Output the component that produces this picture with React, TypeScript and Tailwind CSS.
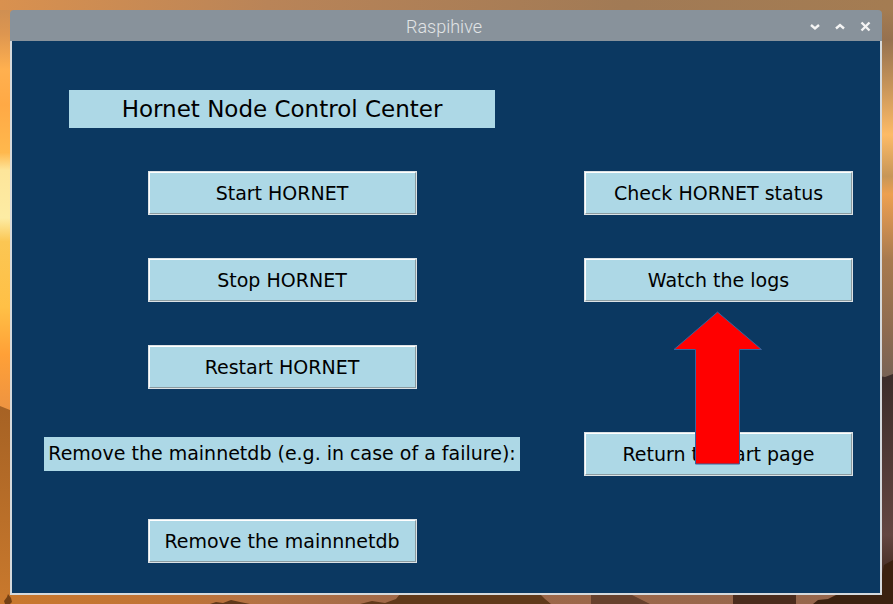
import type { ReactNode } from "react";

function Wallpaper() {
  return (
    <svg
      className="absolute inset-0 h-full w-full"
      viewBox="0 0 893 604"
      preserveAspectRatio="none"
      aria-hidden="true"
    >
      <defs>
        <linearGradient id="skyTop" x1="0" x2="1" y1="0" y2="0">
          <stop offset="0" stopColor="#d9914f" />
          <stop offset="0.3" stopColor="#b98458" />
          <stop offset="0.7" stopColor="#a17a55" />
          <stop offset="1" stopColor="#a47c52" />
        </linearGradient>
        <linearGradient id="skyLeft" x1="0" x2="0" y1="0" y2="1">
          <stop offset="0" stopColor="#cf8f52" />
          <stop offset="0.04" stopColor="#dd9650" />
          <stop offset="0.1" stopColor="#ffb04f" />
          <stop offset="0.16" stopColor="#ffa945" />
          <stop offset="0.24" stopColor="#ffb84d" />
          <stop offset="0.27" stopColor="#fde59a" />
          <stop offset="0.35" stopColor="#fdeca4" />
          <stop offset="0.39" stopColor="#fbc653" />
          <stop offset="0.5" stopColor="#ffc046" />
          <stop offset="0.58" stopColor="#ffa037" />
          <stop offset="0.67" stopColor="#ee9441" />
        </linearGradient>
        <linearGradient id="hillLeft" x1="0" x2="0" y1="0" y2="1">
          <stop offset="0" stopColor="#a66224" />
          <stop offset="1" stopColor="#c9792d" />
        </linearGradient>
        <linearGradient id="skyRight" x1="0" x2="0" y1="0" y2="1">
          <stop offset="0" stopColor="#a47c52" />
          <stop offset="0.05" stopColor="#96714f" />
          <stop offset="0.13" stopColor="#c8955a" />
          <stop offset="0.21" stopColor="#fdbb66" />
          <stop offset="0.28" stopColor="#c79657" />
          <stop offset="0.31" stopColor="#eda04f" />
          <stop offset="0.36" stopColor="#cf8f50" />
          <stop offset="0.42" stopColor="#a87a4e" />
          <stop offset="0.54" stopColor="#8e6b50" />
          <stop offset="0.62" stopColor="#786355" />
        </linearGradient>
        <linearGradient id="hillRight" x1="0" x2="0" y1="0" y2="1">
          <stop offset="0" stopColor="#3c2d2a" />
          <stop offset="0.7" stopColor="#644641" />
          <stop offset="1" stopColor="#2d1a0c" />
        </linearGradient>
        <linearGradient id="ground" x1="0" x2="1" y1="0" y2="0">
          <stop offset="0" stopColor="#c9782d" />
          <stop offset="0.2" stopColor="#bf7337" />
          <stop offset="0.3" stopColor="#b17145" />
          <stop offset="0.45" stopColor="#9f6848" />
          <stop offset="1" stopColor="#94664d" />
        </linearGradient>
      </defs>
      <rect width="893" height="604" fill="url(#skyTop)" />
      <rect y="10" width="20" height="594" fill="url(#skyLeft)" />
      <path d="M0 406 L10 410 V604 H0Z" fill="url(#hillLeft)" />
      <rect x="873" y="10" width="20" height="594" fill="url(#skyRight)" />
      <path d="M873 375 L885 377 L893 374 V604 H873Z" fill="url(#hillRight)" />
      <rect y="594" width="893" height="10" fill="url(#ground)" />
      <path d="M8 594 L11 598 L12 602 L10 604 H5 L4 601 L7 597Z" fill="#744014" />
      <path
        d="M210 604 L216 602 L223 603 L231 600 L240 602 L250 604Z M360 604 L372 601 L385 603 L396 599 L400 594 H540 L545 599 L551 604Z"
        fill="#60391a"
      />
      <path d="M591 594 H630 L640 599 L650 604 H591Z" fill="#67412d" />
      <path d="M733 594 H796 V604 H733Z" fill="#4b2c1d" />
      <path d="M813 604 L818 600 L828 599 L836 595 H878 L884 565 L893 560 V604Z" fill="#3b210f" />
    </svg>
  );
}

function HiveButton({ children }: { children: ReactNode }) {
  return (
    <button
      type="button"
      className="h-11 w-[269px] max-w-full border-2 border-t-white border-r-[#8b9ba0] border-b-[#8b9ba0] border-l-white bg-[#add8e6] text-[19px] leading-6 whitespace-nowrap text-black outline outline-1 -outline-offset-1 outline-[#dce2e5]"
    >
      {children}
    </button>
  );
}

function WindowControl({ label, path }: { label: string; path: string }) {
  return (
    <button type="button" aria-label={label} className="flex h-6 w-[25px] items-center justify-center">
      <svg width="11" height="11" viewBox="0 0 11 11" fill="none" stroke="#f4f4f4" strokeWidth="2.4">
        <path d={path} />
      </svg>
    </button>
  );
}

function PointerArrow() {
  return (
    <svg
      className="pointer-events-none absolute bottom-8 left-1/2 -translate-x-1/2"
      width="90"
      height="154"
      viewBox="0 0 90 154"
      aria-hidden="true"
    >
      <path
        d="M43.500 1 L87.500 38.500 H65.500 V153 H21.500 V38.500 H0Z"
        fill="#ff0000"
        stroke="#35649f"
      />
    </svg>
  );
}

export default function App() {
  return (
    <div className="relative min-h-screen pt-2.5 pr-[11px] pb-[9px] pl-2.5 font-['DejaVu_Sans',sans-serif]">
      <Wallpaper />
      <main className="relative">
        <header className="grid h-[31px] grid-cols-[1fr_auto_1fr] items-center rounded-t bg-[#88929b] pt-0.5 pr-1">
          <h1 className="col-start-2 font-[Roboto,sans-serif] text-lg font-light text-[#e1e4e6]">Raspihive</h1>
          <div className="flex justify-end">
            <WindowControl label="Minimize" path="M1 4 L5 7.500 L9 4" />
            <WindowControl label="Maximize" path="M1 7.500 L5 4 L9 7.500" />
            <WindowControl label="Close" path="M1.500 1.500 L9.500 9.500 M9.500 1.500 L1.500 9.500" />
          </div>
        </header>
        <div className="grid grid-cols-[477fr_269fr] justify-items-center gap-x-16 border-x-2 border-b-2 border-[#d5d9dc] bg-[#0b3861] pr-[27px] pb-[9px] pl-8">
          <h2 className="mt-[49px] mb-[21px] flex h-[38px] w-[426px] max-w-full items-center justify-center bg-[#add8e6] text-[23px] whitespace-nowrap text-black">
            Hornet Node Control Center
          </h2>
          <div className="col-start-1 flex h-[87px] items-center">
            <HiveButton>Start HORNET</HiveButton>
          </div>
          <div className="flex h-[87px] items-center">
            <HiveButton>Check HORNET status</HiveButton>
          </div>
          <div className="flex h-[87px] items-center">
            <HiveButton>Stop HORNET</HiveButton>
          </div>
          <div className="flex h-[87px] items-center">
            <HiveButton>Watch the logs</HiveButton>
          </div>
          <div className="flex h-[87px] items-center">
            <HiveButton>Restart HORNET</HiveButton>
          </div>
          <div className="col-start-1 flex h-[87px] w-full items-center">
            <p className="flex h-[34px] w-full items-center justify-center bg-[#add8e6] text-[19px] whitespace-nowrap text-black">
              Remove the mainnetdb (e.g. in case of a failure):
            </p>
          </div>
          <div className="relative flex h-[87px] items-center">
            <HiveButton>Return to start page</HiveButton>
            <PointerArrow />
          </div>
          <div className="col-start-1 flex h-[87px] items-center">
            <HiveButton>Remove the mainnnetdb</HiveButton>
          </div>
        </div>
      </main>
    </div>
  );
}
